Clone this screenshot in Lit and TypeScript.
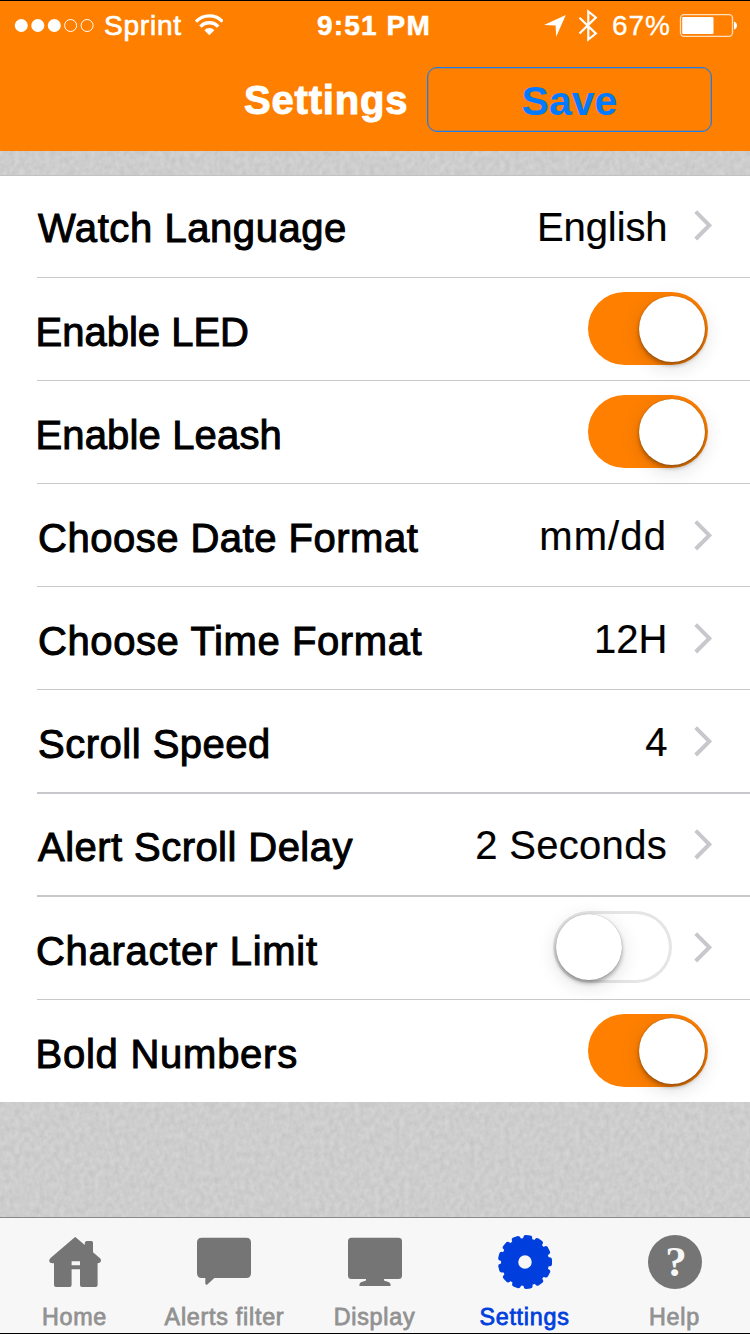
import { LitElement, html, css, svg, nothing } from "lit";
import { customElement, property } from "lit/decorators.js";
import { classMap } from "lit/directives/class-map.js";

interface Row {
  id: string;
  label: string;
  value?: string;
  toggle?: boolean;
  chevron?: boolean;
}

const ROWS: Row[] = [
  { id: "lang", label: "Watch Language", value: "English", chevron: true },
  { id: "led", label: "Enable LED", toggle: true },
  { id: "leash", label: "Enable Leash", toggle: true },
  { id: "date", label: "Choose Date Format", value: "mm/dd", chevron: true },
  { id: "time", label: "Choose Time Format", value: "12H", chevron: true },
  { id: "speed", label: "Scroll Speed", value: "4", chevron: true },
  { id: "delay", label: "Alert Scroll Delay", value: "2 Seconds", chevron: true },
  { id: "limit", label: "Character Limit", toggle: false, chevron: true },
  { id: "bold", label: "Bold Numbers", toggle: true },
];

@customElement("toggle-switch")
export class ToggleSwitch extends LitElement {
  @property({ type: Boolean }) on = false;

  static styles = css`
    :host { display: block; }
    .track {
      box-sizing: border-box;
      display: flex;
      width: 119px;
      height: 72px;
      padding: 3px;
      border-radius: 36px;
      box-shadow: inset 0 0 0 3px #e5e5e5;
    }
    .track.on {
      width: 120px;
      height: 73px;
      padding: 3.5px;
      justify-content: flex-end;
      background: #ff8000;
      box-shadow: none;
      border-radius: 36.5px;
    }
    .knob {
      width: 66px;
      height: 66px;
      border-radius: 50%;
      background: #fff;
      box-shadow: 0 5px 20px rgba(0, 0, 0, 0.14), 0 3px 4px rgba(0, 0, 0, 0.3),
        0 0 1px rgba(0, 0, 0, 0.35);
    }
  `;

  render() {
    return html`<div class=${classMap({ track: true, on: this.on })}><div class="knob"></div></div>`;
  }
}

@customElement("status-bar")
export class StatusBar extends LitElement {
  static styles = css`
    :host {
      display: grid;
      grid-template-columns: 317px 1fr auto;
      height: 50px;
      color: #fff;
      font-size: 28px;
      line-height: 50px;
    }
    .left, .right { display: flex; align-items: flex-start; }
    .left { padding-left: 14px; }
    .right { padding-right: 13px; }
    svg { display: block; flex: none; }
    .carrier { width: 91px; margin-left: 9px; letter-spacing: 0.8px; -webkit-text-stroke: 0.7px #fff; }
    .clock { font-weight: 700; letter-spacing: 1.15px; -webkit-text-stroke: 0.5px #fff; }
    .percent { width: 67px; margin-left: 14px; letter-spacing: 0.9px; -webkit-text-stroke: 0.3px #fff; }
  `;

  render() {
    return html`
      <div class="left">
        <svg width="81" height="50" viewBox="14 1 81 50" fill="#fff" stroke="#fff">
          ${[21.3, 37.8, 54.3].map((x) => svg`<circle cx=${x} cy="25.5" r="6.5" stroke="none" />`)}
          ${[70.6, 87.1].map((x) => svg`<circle cx=${x} cy="25.5" r="6" fill="none" stroke-width="1" />`)}
        </svg>
        <span class="carrier">Sprint</span>
        <svg width="28" height="50" viewBox="195 1 28 50" fill="none" stroke="#fff" stroke-width="3.3">
          <path d="M196 21.6a18.3 18.3 0 0 1 26.600 0" />
          <path d="M200.400 26.600a12.200 12.200 0 0 1 17.800 0" />
          <path d="M209.300 35.200l-5-5a7 7 0 0 1 10 0z" fill="#fff" stroke="none" />
        </svg>
      </div>
      <div class="clock">9:51 PM</div>
      <div class="right">
        <svg width="54" height="50" viewBox="544 1 54 50">
          <path d="M565.800 15L556.200 36.800L555.600 25.600L544 25z" fill="#fff" />
          <path d="M579.500 17.800l16.300 15.700l-7.500 6V11.500l7.500 6L579.500 33.500" fill="none" stroke="#fff" stroke-width="2.200" />
        </svg>
        <span class="percent">67%</span>
        <svg width="58" height="50" viewBox="679 1 58 50">
          <rect x="680.5" y="14.7" width="52" height="21.6" rx="3.5" fill="none" stroke="#fff" stroke-opacity=".75" stroke-width="1.3" />
          <rect x="682.2" y="17" width="31.3" height="17" rx="1" fill="#fff" />
          <path d="M734 21.500q3 1 3 4t-3 4z" fill="#fff" />
        </svg>
      </div>
    `;
  }
}

@customElement("tab-bar")
export class TabBar extends LitElement {
  static styles = css`
    :host {
      box-sizing: border-box;
      display: grid;
      grid-template-columns: repeat(5, 150px);
      height: 117px;
      border-top: 1px solid #8a8a8a;
      border-bottom: 1px solid #000;
      background: #f7f7f7;
    }
    .tab {
      display: flex;
      flex-direction: column;
      align-items: center;
      padding-top: 12px;
      color: #757575;
    }
    .tab.active { color: #003fde; }
    svg { display: block; }
    .name {
      margin-top: 10px;
      color: #929292;
      font-size: 23.3px;
      line-height: 26px;
      letter-spacing: 0.75px;
      margin-right: 1px;
      white-space: nowrap;
      -webkit-text-stroke: 0.8px currentColor;
    }
    .active .name { color: #003fde; }
    .mark { font: 700 43px "Liberation Serif", serif; }
  `;

  private icon(name: string) {
    switch (name) {
      case "Home":
        return svg`<path fill-rule="evenodd" d="M30.6 5.2L39.8 13V11Q40 9 42 9h4.5Q48 9 48 10.8V20.3L55.3 26.6Q56.3 28 55.8 29.6Q55.2 31.2 52.6 31.2V53Q52.6 55 50.6 55H37Q35 55 35 53V37.3H26.6V53Q26.6 55 24.6 55H11Q9 55 9 53V31.2Q4.6 31.6 4.3 29.6Q3.8 27.6 5.8 25.8L29.8 5.2Q30.2 4.9 30.6 5.2ZM26.6 29.2V33.2H35V29.2Z" />`;
      case "Alerts filter":
        return svg`<path d="M6.700 5.800H51.300Q56 5.800 56 10.500V41.300Q56 46 51.300 46H19.300L12.600 52.300Q10.300 53.800 10.300 51V46H6.700Q2 46 2 41.300V10.500Q2 5.800 6.700 5.800Z" />`;
      case "Display":
        return svg`<path d="M6.500 5.800H53.500Q57 5.800 57 9.300V43.500Q57 47 53.500 47H39V48.600L44 50.200Q46 51 45.500 54H14.500Q14 51 16 50.200L21 48.600V47H6.500Q3 47 3 43.500V9.300Q3 5.800 6.500 5.800Z" />`;
      case "Settings":
        return svg`
          <circle cx="30" cy="30" r="19" fill="none" stroke="currentColor" stroke-width="10" />
          <circle cx="30" cy="30" r="12" fill="none" stroke="currentColor" stroke-width="10.500" />
          ${Array.from({ length: 13 }, (_, i) => svg`
            <rect x="25.500" y="3" width="9" height="9" rx="2.600" transform="rotate(${6.5 + (i * 360) / 13} 30 30)" />`)}`;
      default:
        return svg`<circle cx="30" cy="30" r="27" />
          <text class="mark" x="31" y="44" text-anchor="middle" fill="#f7f7f7">?</text>`;
    }
  }

  render() {
    return ["Home", "Alerts filter", "Display", "Settings", "Help"].map(
      (name) => html`
        <div class=${classMap({ tab: true, active: name === "Settings" })}>
          <svg width="60" height="64" viewBox="0 -2 60 64" fill="currentColor">${this.icon(name)}</svg>
          <span class="name">${name}</span>
        </div>
      `
    );
  }
}

@customElement("app-root")
export class AppRoot extends LitElement {
  static styles = css`
    :host {
      box-sizing: border-box;
      display: flex;
      flex-direction: column;
      width: 750px;
      height: 1334px;
      overflow: hidden;
      background: #ccc;
      color: #000;
      font-family: "Liberation Sans", Arial, sans-serif;
    }
    .top {
      box-sizing: border-box;
      height: 151px;
      border-top: 1px solid #000;
      background: #ff8000;
    }
    .nav { display: flex; align-items: flex-start; padding: 16px 38px 0 244px; }
    .title {
      width: 183px;
      color: #fff;
      font-size: 40px;
      font-weight: 700;
      line-height: 66px;
      letter-spacing: 0.8px;
      -webkit-text-stroke: 1px #fff;
    }
    .save {
      box-sizing: border-box;
      width: 285px;
      height: 65px;
      border: 1px solid #1a7df0;
      box-shadow: inset 0 0 0 0.5px rgba(0, 122, 255, 0.5);
      border-radius: 10px;
      color: #007aff;
      font-size: 41px;
      font-weight: 700;
      line-height: 66px;
      text-align: center;
    }
    .strip { display: block; width: 750px; height: 24px; }
    .fill { display: block; width: 750px; height: 115px; }
    .list { border-top: 1px solid #c2c2c2; background: #fff; }
    .row {
      box-sizing: border-box;
      display: flex;
      align-items: flex-start;
      height: 103px;
      margin-left: 37px;
      padding-right: 38px;
      border-bottom: 1px solid #c8c7cc;
      font-size: 40px;
      line-height: 102px;
      white-space: nowrap;
    }
    .label { flex: 1; padding: 3px 0 0 1px; letter-spacing: 0.5px; -webkit-text-stroke: 1px #000; }
    .value { padding-top: 1px; letter-spacing: 0.3px; -webkit-text-stroke: 0.2px #000; }
    .chev { display: block; margin: 36px 0 0 27px; }
    toggle-switch { margin: 14px 4px 0 0; }

    .lang { height: 102px; line-height: 100px; }
    .speed { height: 104px; border-bottom-width: 2px; }
    .delay { border-bottom-width: 2px; }
    .bold { height: 102px; border-bottom: 0; }

    .lang .label, .delay .label { padding-top: 2px; }
    .delay .value { padding-top: 0; }
    .led .label, .leash .label, .bold .label { padding-left: 0; margin-left: -1.5px; }
    .limit .label { padding-left: 0; margin-left: -1px; }

    .lang .label { letter-spacing: 0.57px; }
    .led .label { letter-spacing: 0; }
    .leash .label { letter-spacing: 0.15px; }
    .time .label { letter-spacing: 0.6px; }
    .delay .label { letter-spacing: 0.45px; }
    .limit .label { letter-spacing: 0.7px; }
    .bold .label { letter-spacing: 0.75px; }

    .lang .value { letter-spacing: -0.1px; }
    .date .value { letter-spacing: 1.1px; }
    .time .value { letter-spacing: 0; }
    .speed .value { letter-spacing: 0; }
    .time .chev, .speed .chev, .lang .chev { margin-left: 26.500px; }

    .lang .chev { margin-top: 34px; }
    .delay .chev, .limit .chev { margin-top: 35px; }
    .limit toggle-switch { margin-right: 0; }
    .limit .chev { margin-left: 22px; }
  `;

  private texture(cls: string, height: number, seed: number) {
    return html`
      <svg class=${cls} viewBox="0 0 750 ${height}" aria-hidden="true">
        <filter id="grain-${cls}" x="0" y="0" width="100%" height="100%" color-interpolation-filters="sRGB">
          <feTurbulence type="fractalNoise" baseFrequency="0.2 0.16" numOctaves="3" seed=${seed} />
          <feColorMatrix values="0.09 0 0 0 0.76  0.09 0 0 0 0.76  0.09 0 0 0 0.76  0 0 0 0 1" />
        </filter>
        <rect width="750" height=${height} filter="url(#grain-${cls})" />
      </svg>
    `;
  }

  private row(r: Row) {
    return html`
      <div class="row ${r.id}">
        <span class="label">${r.label}</span>
        ${r.value ? html`<span class="value">${r.value}</span>` : nothing}
        ${r.toggle !== undefined ? html`<toggle-switch ?on=${r.toggle}></toggle-switch>` : nothing}
        ${r.chevron
          ? html`<svg class="chev" width="18" height="31" viewBox="0 0 18 31" fill="none" stroke="#c7c7cc" stroke-width="4">
              <path d="M1.700 1.700L15.300 15.300L1.700 29" />
            </svg>`
          : nothing}
      </div>
    `;
  }

  render() {
    return html`
      <div class="top">
        <status-bar></status-bar>
        <div class="nav">
          <div class="title">Settings</div>
          <div class="save">Save</div>
        </div>
      </div>
      ${this.texture("strip", 24, 4)}
      <div class="list">${ROWS.map((r) => this.row(r))}</div>
      ${this.texture("fill", 115, 9)}
      <tab-bar></tab-bar>
    `;
  }
}
